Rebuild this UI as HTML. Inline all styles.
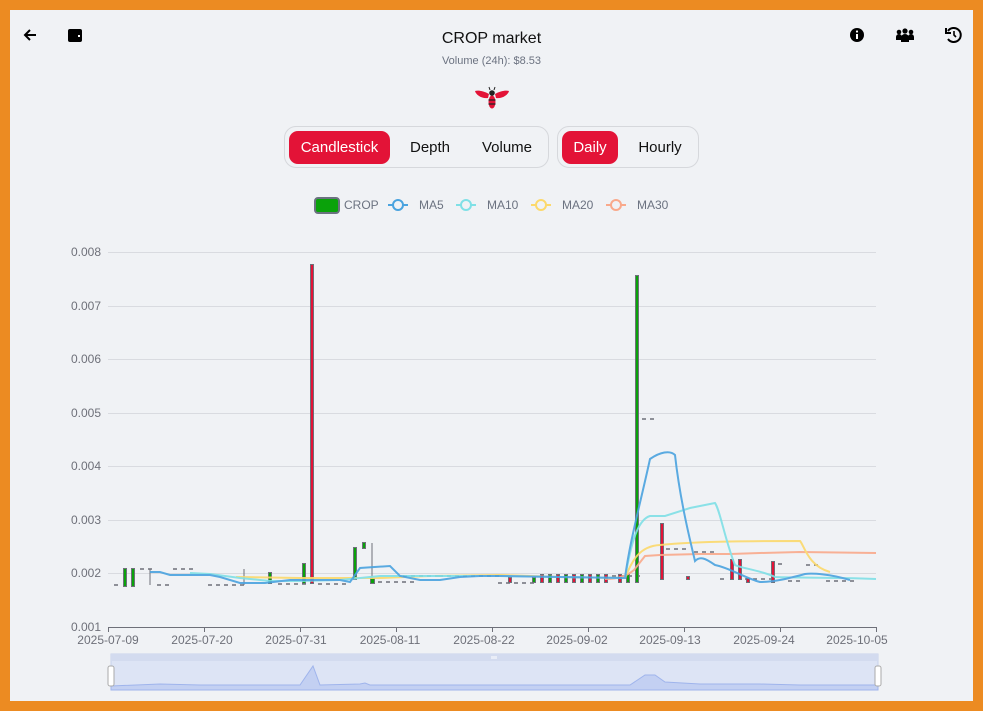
<!DOCTYPE html>
<html><head><meta charset="utf-8"><style>
*{margin:0;padding:0;box-sizing:border-box}
body{width:983px;height:711px;background:#EC8B22;font-family:"Liberation Sans",sans-serif;position:relative;overflow:hidden}
#p{position:absolute;left:10px;top:10px;width:963px;height:691px;background:#F0F2F5}
.a{position:absolute}
.grp{position:absolute;top:126px;height:42px;border:1px solid #d6d8dc;border-radius:12px}
.btn{position:absolute;top:131px;height:33px;line-height:33px;font-size:15px;color:#111;text-align:center}
.on{background:#E31337;color:#fff;border-radius:9px}
</style></head><body>
<div id="p"></div>
<svg class="a" style="left:0;top:0" width="983" height="711">
<path d="M36 35H25M30 30l-5 5 5 5" stroke="#000" stroke-width="2" fill="none"/>
<rect x="68" y="29" width="14" height="13" rx="2" fill="#000"/><rect x="78" y="35" width="2" height="2" fill="#fff"/>
<circle cx="857" cy="35" r="7" fill="#000"/><rect x="856" y="34" width="2" height="5" fill="#fff"/><circle cx="857" cy="31.5" r="1.1" fill="#fff"/>
<circle cx="899" cy="32" r="2.3"/><circle cx="905" cy="31" r="2.6"/><circle cx="911" cy="32" r="2.3"/>
<path d="M896 40v-3a3 3 0 0 1 6 0v3zM901 42v-4a4 4 0 0 1 8 0v4zM908 40v-3a3 3 0 0 1 6 0v3z"/>
<path d="M948 31a7 7 0 1 1 0 8" stroke="#000" stroke-width="2" fill="none"/><path d="M946 28v5h5" stroke="#000" stroke-width="2" fill="none"/><path d="M954 31v4l2 2" stroke="#000" stroke-width="1.6" fill="none"/>
<path d="M489 94c-5-3-11-4-14-3 1 4 7 8 13 7z" fill="#E31337"/><path d="M495 94c5-3 11-4 14-3-1 4-7 8-13 7z" fill="#E31337"/>
<ellipse cx="492" cy="102" rx="3.5" ry="6.5" fill="#E31337"/><path d="M488.5 100h7M488.5 104h7" stroke="#222" stroke-width="1.3"/>
<circle cx="492" cy="93" r="2.8" fill="#222"/><path d="M490 90l-1-3M494 90l1-3" stroke="#222"/>
</svg>
<div class="a" style="left:0;width:983px;top:30px;text-align:center;font-size:16px;color:#111">CROP market</div>
<div class="a" style="left:0;width:983px;top:55px;text-align:center;font-size:11px;color:#6b7280">Volume (24h): $8.53</div>
<div class="grp" style="left:284px;width:265px"></div>
<div class="grp" style="left:557px;width:142px"></div>
<div class="btn on" style="left:289px;width:101px">Candlestick</div>
<div class="btn" style="left:399px;width:62px">Depth</div>
<div class="btn" style="left:472px;width:70px">Volume</div>
<div class="btn on" style="left:562px;width:56px">Daily</div>
<div class="btn" style="left:626px;width:68px">Hourly</div>
<svg class="a" style="left:0;top:0" width="983" height="711" font-family="Liberation Sans" font-size="12">
<rect x="315" y="198" width="24" height="15" rx="3" fill="#0aa20a" stroke="#6b7280" stroke-width="2"/>
<text x="344" y="209" fill="#6b7280">CROP</text>
<g fill="none" stroke-width="2">
<path d="M388 205h20" stroke="#4aa3df"/><circle cx="398" cy="205" r="5" fill="#F0F2F5" stroke="#4aa3df"/>
<path d="M456 205h20" stroke="#7fe0e6"/><circle cx="466" cy="205" r="5" fill="#F0F2F5" stroke="#7fe0e6"/>
<path d="M531 205h20" stroke="#fcd96b"/><circle cx="541" cy="205" r="5" fill="#F0F2F5" stroke="#fcd96b"/>
<path d="M606 205h20" stroke="#f9a98b"/><circle cx="616" cy="205" r="5" fill="#F0F2F5" stroke="#f9a98b"/>
</g>
<text x="419" y="209" fill="#6b7280">MA5</text><text x="487" y="209" fill="#6b7280">MA10</text><text x="562" y="209" fill="#6b7280">MA20</text><text x="637" y="209" fill="#6b7280">MA30</text>
<g stroke="#d9dbe0"><path d="M108 252.5H876M108 306.5H876M108 359.5H876M108 413.5H876M108 466.5H876M108 520.5H876M108 573.5H876"/></g>
<path d="M108 627.5H876" stroke="#6e7079"/>
<g stroke="#6e7079"><path d="M108.5 627v5M204.5 627v5M300.5 627v5M396.5 627v5M492.5 627v5M588.5 627v5M684.5 627v5M780.5 627v5M876.5 627v5"/></g>
<g fill="#6e7079" text-anchor="end"><text x="101" y="256">0.008</text><text x="101" y="310">0.007</text><text x="101" y="363">0.006</text><text x="101" y="417">0.005</text><text x="101" y="470">0.004</text><text x="101" y="524">0.003</text><text x="101" y="577">0.002</text><text x="101" y="631">0.001</text></g>
<g fill="#6e7079" text-anchor="middle"><text x="108" y="644">2025-07-09</text><text x="202" y="644">2025-07-20</text><text x="296" y="644">2025-07-31</text><text x="390" y="644">2025-08-11</text><text x="484" y="644">2025-08-22</text><text x="577" y="644">2025-09-02</text><text x="670" y="644">2025-09-13</text><text x="764" y="644">2025-09-24</text><text x="857" y="644">2025-10-05</text></g>
<g stroke="#6e7079" stroke-width="1.5" stroke-dasharray="4 4"><path d="M114 585h8M140 569h14M157 585h14M173 569h24M208 585h36M278 584h30M318 584h30M378 582h40M403 576h40M439 576h60M498 583h40M540 576h100M642 419h16M666 549h20M694 552h20M720 579h6M745 579h30M778 564h8M788 581h14M806 565h16M826 581h30"/></g>
<g stroke="#6e7079"><path d="M150 569v16M244 569v16M372 543v35"/></g>
<g stroke="#6e7079" stroke-width="1">
<rect x="123.5" y="568.5" width="3" height="18" fill="#0aa20a"/>
<rect x="131.5" y="568.5" width="3" height="18" fill="#0aa20a"/>
<rect x="268.5" y="572.5" width="3" height="11" fill="#0aa20a"/>
<rect x="302.5" y="563.5" width="3" height="20" fill="#0aa20a"/>
<rect x="310.5" y="264.5" width="3" height="319" fill="#E31337"/>
<rect x="353.5" y="547.5" width="3" height="32" fill="#0aa20a"/>
<rect x="362.5" y="542.5" width="3" height="6" fill="#0aa20a"/>
<rect x="370.5" y="578.5" width="4" height="5" fill="#0aa20a"/>
<rect x="635.5" y="275.5" width="3" height="307" fill="#0aa20a"/>
<rect x="660.5" y="523.5" width="3" height="56" fill="#E31337"/>
<rect x="686.5" y="576.5" width="3" height="3" fill="#E31337"/>
<rect x="730.5" y="559.5" width="3" height="20" fill="#E31337"/>
<rect x="738.5" y="559.5" width="3" height="20" fill="#E31337"/>
<rect x="746.5" y="578.5" width="3" height="4" fill="#E31337"/>
<rect x="771.5" y="561.5" width="3" height="21" fill="#E31337"/>
<rect x="540.5" y="574.5" width="3" height="8" fill="#E31337"/><rect x="548.5" y="574.5" width="3" height="8" fill="#0aa20a"/><rect x="556.5" y="574.5" width="3" height="8" fill="#E31337"/><rect x="564.5" y="574.5" width="3" height="8" fill="#0aa20a"/><rect x="572.5" y="574.5" width="3" height="8" fill="#E31337"/><rect x="580.5" y="574.5" width="3" height="8" fill="#0aa20a"/><rect x="588.5" y="574.5" width="3" height="8" fill="#E31337"/><rect x="596.5" y="574.5" width="3" height="8" fill="#0aa20a"/><rect x="604.5" y="574.5" width="3" height="8" fill="#E31337"/><rect x="618.5" y="574.5" width="3" height="8" fill="#E31337"/><rect x="626.5" y="574.5" width="3" height="8" fill="#0aa20a"/>
<rect x="508.5" y="577.5" width="3" height="5" fill="#E31337"/><rect x="532.5" y="577.5" width="3" height="5" fill="#0aa20a"/>
</g>
<g fill="none" stroke-width="2" opacity="0.9">
<path d="M605 579C620 579 628 575 634 570L645 556 660 555 700 554 730 554 760 553 800 552 876 553" stroke="#f9a98b"/>
<path d="M236 577L300 578 350 578 380 578 430 576 500 575 560 577 625 578C632 560 640 546 660 545 700 541 760 541 800 541 804 545 808 566 830 572 876 575" stroke="#fcd96b"/>
<path d="M190 573L210 574 240 578 270 581 300 581 340 580 380 576 430 576 500 576 560 577 625 578C630 550 636 520 650 516L665 516 690 508 715 503C720 510 725 540 735 565 740 568 760 570 775 577 800 578 830 577 876 579" stroke="#7fe0e6"/>
<path d="M150 572L160 572 170 575 210 575 220 577 240 583 265 583 290 580 340 580 350 582 360 568 390 566 400 576 420 580 440 580 460 577 480 576 500 576 560 577 625 578C630 540 640 505 650 459 660 452 670 450 675 455 680 500 690 540 695 561 700 556 705 558 715 565 730 568 745 578 760 582 775 582 790 578 805 574 812 573 830 574 850 580 876 582" stroke="#4aa3df"/>
</g>
<rect x="111" y="654" width="767" height="36" fill="#dde4f5" stroke="#c8d2ea"/>
<rect x="111" y="654" width="767" height="7" fill="#d3dbef"/>
<path d="M111 686L160 684 200 685 300 685 313 666 320 685 360 684 365 683 370 685 630 685 645 675 655 675 665 682 700 684 760 684 800 685 878 685V690H111z" fill="#c3d0f2" stroke="#9fb4ec"/>
<rect x="108" y="666" width="6" height="20" rx="2" fill="#fff" stroke="#aaa"/>
<rect x="875" y="666" width="6" height="20" rx="2" fill="#fff" stroke="#aaa"/>
<path d="M492 656v3M494 656v3M496 656v3" stroke="#fff"/>
</svg>
</body></html>
